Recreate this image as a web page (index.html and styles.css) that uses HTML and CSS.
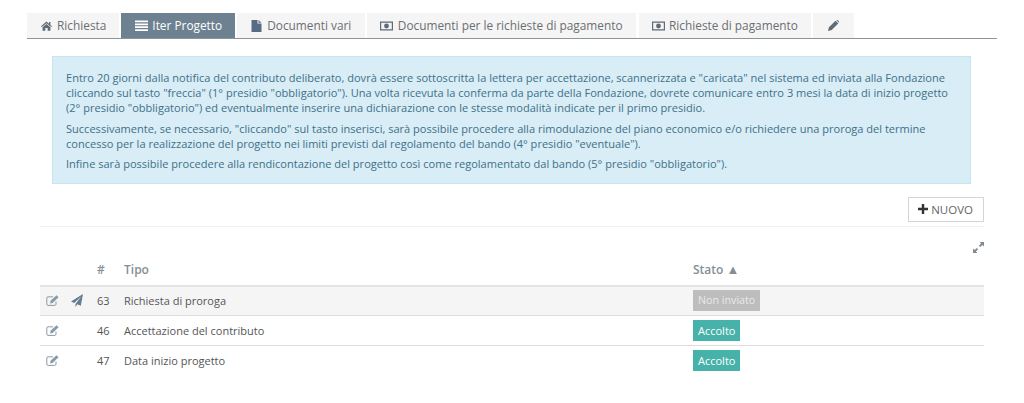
FILE: index.html
```html
<!DOCTYPE html>
<html lang="it">
<head>
    <meta charset="UTF-8">
    <meta name="viewport" content="width=device-width, initial-scale=1.0">
    <title>Iter Progetto</title>
    <link rel="stylesheet" href="styles.css">
</head>
<body>
    <ul class="tabs">
        <li class="tab">
            <svg class="tab-icon" viewBox="0 0 14 12"><path fill-rule="evenodd" d="M7 0.400L10.200 3.100V1H12V4.600L14 6.300L13 7.400L7 2.400L1 7.400L0 6.300Z M7 3.400L12 7.500V12H8.500V8.600H5.500V12H2V7.500Z"/></svg>
            Richiesta
        </li>
        <li class="tab tab-active">
            <svg class="tab-icon tab-icon-wide" viewBox="0 0 13 11"><path d="M0 0.500H13V2.300H0Z M0 3.400H13V5.200H0Z M0 6.300H13V8.100H0Z M0 9.200H13V11H0Z"/></svg>
            Iter Progetto
        </li>
        <li class="tab tab-various">
            <svg class="tab-icon tab-icon-file" viewBox="0 0 10 12"><path d="M0 0H6V3.600H10V12H0Z M7 0L10 2.800H7Z"/></svg>
            Documenti vari
        </li>
        <li class="tab tab-money tab-docs">
            <svg class="tab-icon tab-icon-money" viewBox="0 0 13 10"><path fill-rule="evenodd" d="M0 0.500H13V9.500H0Z M1.200 1.700V8.300H11.800V1.700Z M6.500 2.600A2.400 2.400 0 1 1 6.500 7.400A2.400 2.400 0 1 1 6.500 2.600Z"/></svg>
            Documenti per le richieste di pagamento
        </li>
        <li class="tab tab-money">
            <svg class="tab-icon tab-icon-money" viewBox="0 0 13 10"><path fill-rule="evenodd" d="M0 0.500H13V9.500H0Z M1.200 1.700V8.300H11.800V1.700Z M6.500 2.600A2.400 2.400 0 1 1 6.500 7.400A2.400 2.400 0 1 1 6.500 2.600Z"/></svg>
            Richieste di pagamento
        </li>
        <li class="tab tab-edit">
            <svg class="tab-icon tab-icon-pencil" viewBox="0 0 12 12"><path d="M0 12L1 8L8.200 0.800L11.200 3.800L4 11Z M9 0L9.400 -0.200C9.800 -0.400 10.200 -0.300 10.500 0L12 1.500C12.300 1.800 12.300 2.200 12 2.600L11.800 3Z"/></svg>
        </li>
    </ul>

    <div class="notice">
        <p>Entro 20 giorni dalla notifica del contributo deliberato, dovrà essere sottoscritta la lettera per accettazione, scannerizzata e "caricata" nel sistema ed inviata alla Fondazione cliccando sul tasto "freccia" (1° presidio "obbligatorio"). Una volta ricevuta la conferma da parte della Fondazione, dovrete comunicare entro 3 mesi la data di inizio progetto (2° presidio "obbligatorio") ed eventualmente inserire una dichiarazione con le stesse modalità indicate per il primo presidio.</p>
        <p>Successivamente, se necessario, "cliccando" sul tasto inserisci, sarà possibile procedere alla rimodulazione del piano economico e/o richiedere una proroga del termine concesso per la realizzazione del progetto nei limiti previsti dal regolamento del bando (4° presidio "eventuale").</p>
        <p>Infine sarà possibile procedere alla rendicontazione del progetto così come regolamentato dal bando (5° presidio "obbligatorio").</p>
    </div>

    <div class="content">
        <div class="toolbar">
            <button class="btn-new">
                <svg class="plus-icon" viewBox="0 0 10 10"><path d="M3.800 0H6.200V3.800H10V6.200H6.200V10H3.800V6.200H0V3.800H3.800Z"/></svg>
                NUOVO
            </button>
        </div>

        <div class="expand-row">
            <svg class="expand-icon" viewBox="0 0 11 11"><path d="M6.600 0H11V4.400L9.400 2.900L7.200 5.100L5.900 3.800L8.100 1.600Z M4.400 11H0V6.600L1.600 8.100L3.800 5.900L5.100 7.200L2.900 9.400Z"/></svg>
        </div>

        <table class="list">
            <thead>
                <tr>
                    <th class="col-action"></th>
                    <th class="col-action"></th>
                    <th class="col-num">#</th>
                    <th class="col-type">Tipo</th>
                    <th>Stato <span class="sort">▲</span></th>
                </tr>
            </thead>
            <tbody>
                <tr class="row-hover">
                    <td class="cell-icon">
                        <svg class="edit-icon" viewBox="0 0 13 11"><path fill="none" stroke="currentColor" stroke-width="1" d="M10 6.600V9.200C10 9.900 9.500 10.400 8.800 10.400H2C1.300 10.400 .8 9.900 .8 9.200V3C.8 2.300 1.300 1.800 2 1.800H7"/><path d="M4.500 5.800L10.500 .2L12.600 2.200L6.600 8L4.200 8.400Z"/></svg>
                    </td>
                    <td class="cell-icon">
                        <svg class="send-icon" viewBox="0 0 12 13"><path d="M12 0L9.800 11.800L6.300 10.300L4.500 13V10L10.300 2.400L3.200 9L0 7.600Z"/></svg>
                    </td>
                    <td class="cell-num">63</td>
                    <td class="cell-type">Richiesta di proroga</td>
                    <td><span class="badge badge-grey">Non inviato</span></td>
                </tr>
                <tr>
                    <td class="cell-icon">
                        <svg class="edit-icon" viewBox="0 0 13 11"><path fill="none" stroke="currentColor" stroke-width="1" d="M10 6.600V9.200C10 9.900 9.500 10.400 8.800 10.400H2C1.300 10.400 .8 9.900 .8 9.200V3C.8 2.300 1.300 1.800 2 1.800H7"/><path d="M4.500 5.800L10.500 .2L12.600 2.200L6.600 8L4.200 8.400Z"/></svg>
                    </td>
                    <td></td>
                    <td class="cell-num">46</td>
                    <td class="cell-type">Accettazione del contributo</td>
                    <td><span class="badge badge-green">Accolto</span></td>
                </tr>
                <tr>
                    <td class="cell-icon">
                        <svg class="edit-icon" viewBox="0 0 13 11"><path fill="none" stroke="currentColor" stroke-width="1" d="M10 6.600V9.200C10 9.900 9.500 10.400 8.800 10.400H2C1.300 10.400 .8 9.900 .8 9.200V3C.8 2.300 1.300 1.800 2 1.800H7"/><path d="M4.500 5.800L10.500 .2L12.600 2.200L6.600 8L4.200 8.400Z"/></svg>
                    </td>
                    <td></td>
                    <td class="cell-num">47</td>
                    <td class="cell-type">Data inizio progetto</td>
                    <td><span class="badge badge-green">Accolto</span></td>
                </tr>
            </tbody>
        </table>
    </div>
</body>
</html>
```

FILE: styles.css
```css
* {
    margin: 0;
    padding: 0;
    box-sizing: border-box;
}

body {
    font-family: 'Open Sans', 'Noto Sans', sans-serif;
    font-size: 11px;
    background-color: #ffffff;
    color: #555;
    line-height: 15px;
    overflow: hidden;
}

.tabs {
    display: flex;
    gap: 2px;
    list-style: none;
    margin: 13px 27px 0 27px;
    border-bottom: 1px solid #8a959c;
    width: 970px;
}

.tab {
    display: flex;
    align-items: center;
    gap: 5px;
    height: 25px;
    padding: 0 13px 0 14px;
    background-color: #f5f5f5;
    color: #6b6f73;
    font-size: 11.85px;
}

.tab-active {
    gap: 4px;
    background-color: #6d8190;
    color: #fff;
}

.tab-various {
    padding-right: 14px;
}

.tab-money {
    gap: 4.5px;
    padding-left: 13px;
}

.tab-docs {
    margin-right: 1px;
}

.tab-edit {
    padding: 0 15px;
}

.tab-icon {
    width: 11px;
    height: 10px;
    fill: #5f6b75;
}

.tab-active .tab-icon {
    fill: #fff;
}

.tab-icon-wide {
    width: 13px;
    height: 11px;
}

.tab-icon-file {
    width: 11px;
    height: 12px;
    fill: #566c86;
}

.tab-icon-money {
    width: 13px;
    height: 10px;
}

.tab-icon-pencil {
    width: 11px;
    height: 11px;
}

.notice {
    margin: 17px 53px 0 52px;
    padding: 13px 13px 6px 13px;
    background-color: #d8edf5;
    border: 1px solid #c6e6ee;
    color: #41708a;
    font-size: 11.05px;
    line-height: 15px;
}

.notice p {
    margin-bottom: 5.5px;
}

.content {
    margin: 13px 40px 0 40px;
}

.toolbar {
    display: flex;
    justify-content: flex-end;
    padding-bottom: 4px;
    border-bottom: 1px solid #f0f0f0;
}

.btn-new {
    display: flex;
    align-items: center;
    gap: 3px;
    height: 25px;
    padding: 0 10px 0 9px;
    background-color: #fff;
    border: 1px solid #d5d5d5;
    color: #666;
    font-family: inherit;
    font-size: 11.5px;
}

.plus-icon {
    width: 10px;
    height: 10px;
    fill: #333;
}

.expand-row {
    display: flex;
    justify-content: flex-end;
    padding-top: 15px;
    height: 27px;
}

.expand-icon {
    width: 11px;
    height: 11px;
    fill: #7f8a92;
}

.list {
    width: 100%;
    border-collapse: collapse;
    table-layout: fixed;
}

.list th {
    height: 32px;
    text-align: left;
    font-weight: 600;
    font-size: 12px;
    color: #858e94;
    border-bottom: 2px solid #e4e4e4;
}

.list td {
    height: 30px;
    border-bottom: 1px solid #ddd;
    color: #555;
    font-size: 11px;
}

.list tr:last-child td {
    border-bottom: none;
}

.col-action {
    width: 25px;
}

.col-num {
    width: 33px;
    padding-left: 7px;
}

.col-type {
    width: 570px;
    padding-left: 1px;
}

.cell-type {
    padding-left: 1px;
}

.cell-num {
    padding-left: 7px;
}

.cell-icon {
    padding-left: 6px;
    vertical-align: middle;
}

.row-hover {
    background-color: #f5f5f5;
}

.edit-icon {
    display: block;
    width: 13px;
    height: 11px;
    fill: #8a9ba8;
    color: #8a9ba8;
}

.send-icon {
    display: block;
    width: 12px;
    height: 13px;
    fill: #647c8c;
}

.sort {
    font-size: 13px;
}

.badge {
    display: inline-block;
    padding: 2px 5px;
    height: 21px;
    line-height: 17px;
    color: #fff;
    font-size: 11px;
}

.badge-grey {
    background-color: #bdbdbd;
    color: #e9e9e9;
    font-size: 10.7px;
}

.badge-green {
    background-color: #46b2a9;
}
```
